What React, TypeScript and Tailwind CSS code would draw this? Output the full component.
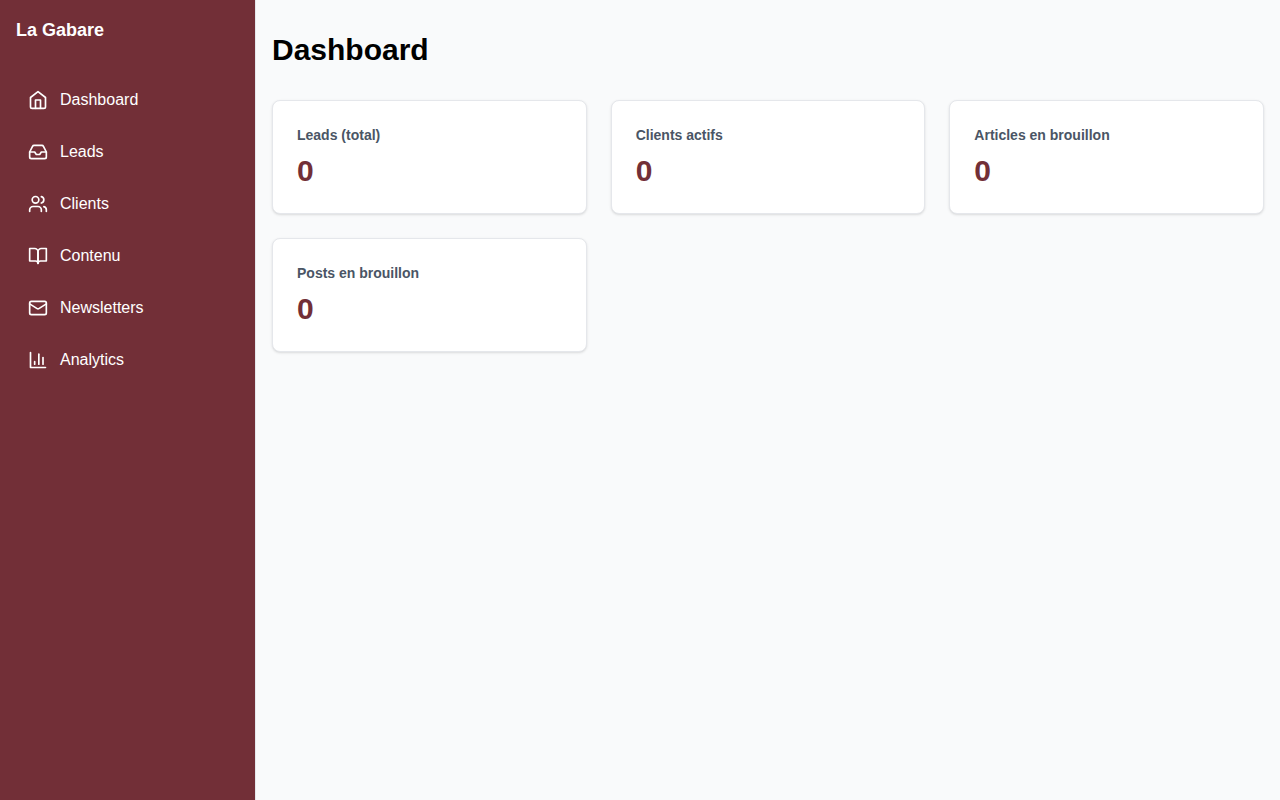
import React from 'react';
import { Inbox } from 'lucide-react';

interface IconProps {
    size?: number;
}

interface NavItem {
    label: string;
    href: string;
    icon: React.ComponentType<IconProps>;
}

interface Stat {
    label: string;
    value: number;
}

const Icon: React.FC<IconProps & { children: React.ReactNode }> = ({ size = 24, children }) => (
    <svg
        width={size}
        height={size}
        viewBox="0 0 24 24"
        fill="none"
        stroke="currentColor"
        strokeWidth="2"
        strokeLinecap="round"
        strokeLinejoin="round"
        aria-hidden="true"
    >
        {children}
    </svg>
);

const HomeIcon: React.FC<IconProps> = ({ size }) => (
    <Icon size={size}>
        <path d="m3 9 9-7 9 7v11a2 2 0 0 1-2 2H5a2 2 0 0 1-2-2z" />
        <path d="M9 22V12h6v10" />
    </Icon>
);

const UsersIcon: React.FC<IconProps> = ({ size }) => (
    <Icon size={size}>
        <path d="M16 21v-2a4 4 0 0 0-4-4H6a4 4 0 0 0-4 4v2" />
        <circle cx="9" cy="7" r="4" />
        <path d="M22 21v-2a4 4 0 0 0-3-3.87" />
        <path d="M16 3.13a4 4 0 0 1 0 7.75" />
    </Icon>
);

const BookIcon: React.FC<IconProps> = ({ size }) => (
    <Icon size={size}>
        <path d="M2 3h6a4 4 0 0 1 4 4v14a3 3 0 0 0-3-3H2z" />
        <path d="M22 3h-6a4 4 0 0 0-4 4v14a3 3 0 0 1 3-3h7z" />
    </Icon>
);

const MailIcon: React.FC<IconProps> = ({ size }) => (
    <Icon size={size}>
        <rect width="20" height="16" x="2" y="4" rx="2" />
        <path d="m22 7-8.97 5.7a1.94 1.94 0 0 1-2.06 0L2 7" />
    </Icon>
);

const ChartIcon: React.FC<IconProps> = ({ size }) => (
    <Icon size={size}>
        <path d="M3 3v18h18" />
        <path d="M18 17V9" />
        <path d="M13 17V5" />
        <path d="M8 17v-3" />
    </Icon>
);

const NAV_ITEMS: NavItem[] = [
    { label: 'Dashboard', href: '#dashboard', icon: HomeIcon },
    { label: 'Leads', href: '#leads', icon: Inbox },
    { label: 'Clients', href: '#clients', icon: UsersIcon },
    { label: 'Contenu', href: '#contenu', icon: BookIcon },
    { label: 'Newsletters', href: '#newsletters', icon: MailIcon },
    { label: 'Analytics', href: '#analytics', icon: ChartIcon }
];

const STATS: Stat[] = [
    { label: 'Leads (total)', value: 0 },
    { label: 'Clients actifs', value: 0 },
    { label: 'Articles en brouillon', value: 0 },
    { label: 'Posts en brouillon', value: 0 }
];

const Sidebar: React.FC = () => (
    <aside className="w-64 shrink-0 bg-[#722f37] text-white border-r border-gray-200">
        <div className="p-4">
            <span className="block text-lg font-bold">La Gabare</span>
        </div>
        <nav className="p-4 flex flex-col gap-1">
            {NAV_ITEMS.map(({ label, href, icon: NavIcon }) => (
                <a
                    key={href}
                    href={href}
                    className="flex items-center gap-3 p-3 rounded-md hover:bg-white/10 transition-colors"
                >
                    <NavIcon size={20} />
                    <span>{label}</span>
                </a>
            ))}
        </nav>
    </aside>
);

const StatCard: React.FC<{ stat: Stat }> = ({ stat }) => (
    <div className="bg-white border border-gray-200 rounded-lg p-6 shadow-sm">
        <h2 className="text-sm font-semibold text-gray-600">{stat.label}</h2>
        <p className="mt-2 text-3xl font-bold text-[#722f37]">{stat.value}</p>
    </div>
);

export default function App() {
    return (
        <div className="min-h-screen flex bg-gray-50 font-['Liberation_Sans',sans-serif] text-black">
            <Sidebar />
            <main className="flex-1 px-4 py-8">
                <h1 className="text-3xl font-bold mb-8">Dashboard</h1>
                <div className="grid grid-cols-1 md:grid-cols-2 lg:grid-cols-3 gap-6">
                    {STATS.map(stat => (
                        <StatCard key={stat.label} stat={stat} />
                    ))}
                </div>
            </main>
        </div>
    );
}
